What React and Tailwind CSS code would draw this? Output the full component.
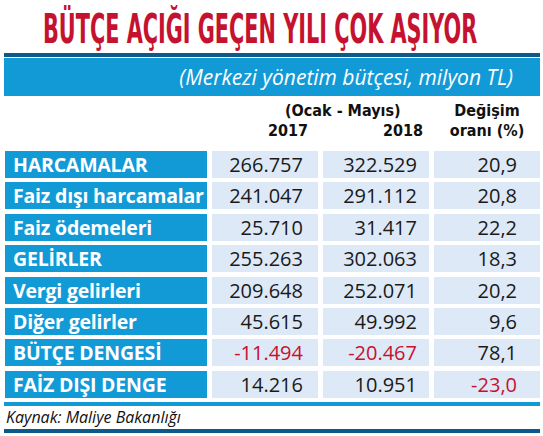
import React from "react";

const rows = [
  ["HARCAMALAR", "266.757", "322.529", "20,9"],
  ["Faiz dışı harcamalar", "241.047", "291.112", "20,8"],
  ["Faiz ödemeleri", "25.710", "31.417", "22,2"],
  ["GELİRLER", "255.263", "302.063", "18,3"],
  ["Vergi gelirleri", "209.648", "252.071", "20,2"],
  ["Diğer gelirler", "45.615", "49.992", "9,6"],
  ["BÜTÇE DENGESİ", "-11.494", "-20.467", "78,1"],
  ["FAİZ DIŞI DENGE", "14.216", "10.951", "-23,0"],
];

const num = (v) => (v.startsWith("-") ? "text-[#c8102e]" : "text-[#1a1a1a]");

export default function App() {
  return (
    <div className="w-[543px] h-[436px] bg-white overflow-hidden flex flex-col" style={{ fontFamily: '"Open Sans", sans-serif' }}>
      <div className="h-[53px] flex items-end pl-[43px] pb-[4px]">
        <div
          className="text-[40px] leading-[40px] font-bold text-[#c4122f] origin-left scale-x-[0.578] whitespace-nowrap"
          style={{ fontFamily: '"DejaVu Sans Condensed", "DejaVu Sans", sans-serif' }}
        >
          BÜTÇE AÇIĞI GEÇEN YILI ÇOK AŞIYOR
        </div>
      </div>
      <div className="ml-[4px] w-[536px] h-[4px] bg-[#0b5a8a]" />
      <div className="ml-[4px] w-[536px] h-[1px] bg-white" />
      <div className="ml-[4px] w-[536px] h-[38px] bg-[#129ad7] flex items-center justify-end pr-[27px]">
        <span className="italic text-white text-[21px] leading-none">(Merkezi yönetim bütçesi, milyon TL)</span>
      </div>
      <div
        className="ml-[5px] h-[55px] grid grid-cols-[202px_106px_106px_106px] gap-x-[5px] text-[#111] font-bold text-[16px] leading-[20px]"
        style={{ fontFamily: '"DejaVu Sans Condensed", "DejaVu Sans", sans-serif' }}
      >
        <div />
        <div className="col-span-2 flex flex-col pt-[5px]">
          <div className="pl-[73px]">(Ocak - Mayıs)</div>
          <div className="flex justify-between pl-[56px] pr-[6px]">
            <span>2017</span>
            <span>2018</span>
          </div>
        </div>
        <div className="flex flex-col items-center pt-[5px]">
          <div>Değişim</div>
          <div>oranı (%)</div>
        </div>
      </div>
      <div className="ml-[5px] flex flex-col gap-[4.4px]">
        {rows.map((r) => (
          <div key={r[0]} className="grid grid-cols-[202px_106px_106px_106px] gap-x-[5px] h-[27px]">
            <div className="bg-[#129ad7] text-white font-bold text-[19.5px] tracking-[-0.2px] leading-[27px] pl-[8px] whitespace-nowrap overflow-hidden">{r[0]}</div>
            <div className={`bg-[#dde9f6] text-[20px] leading-[27px] text-right pr-[15px] ${num(r[1])}`}>{r[1]}</div>
            <div className={`bg-[#dde9f6] text-[20px] leading-[27px] text-right pr-[12px] ${num(r[2])}`}>{r[2]}</div>
            <div className={`bg-[#dde9f6] text-[20px] leading-[27px] text-right pr-[23px] ${num(r[3])}`}>{r[3]}</div>
          </div>
        ))}
      </div>
      <div className="ml-[4px] mt-[4px] w-[536px] h-[4px] bg-[#129ad7]" />
      <div className="h-[23px] pl-[6px] flex items-center italic text-[16px] text-[#111]">Kaynak: Maliye Bakanlığı</div>
      <div className="ml-[4px] w-[536px] h-[4px] bg-[#0b5a8a]" />
    </div>
  );
}
